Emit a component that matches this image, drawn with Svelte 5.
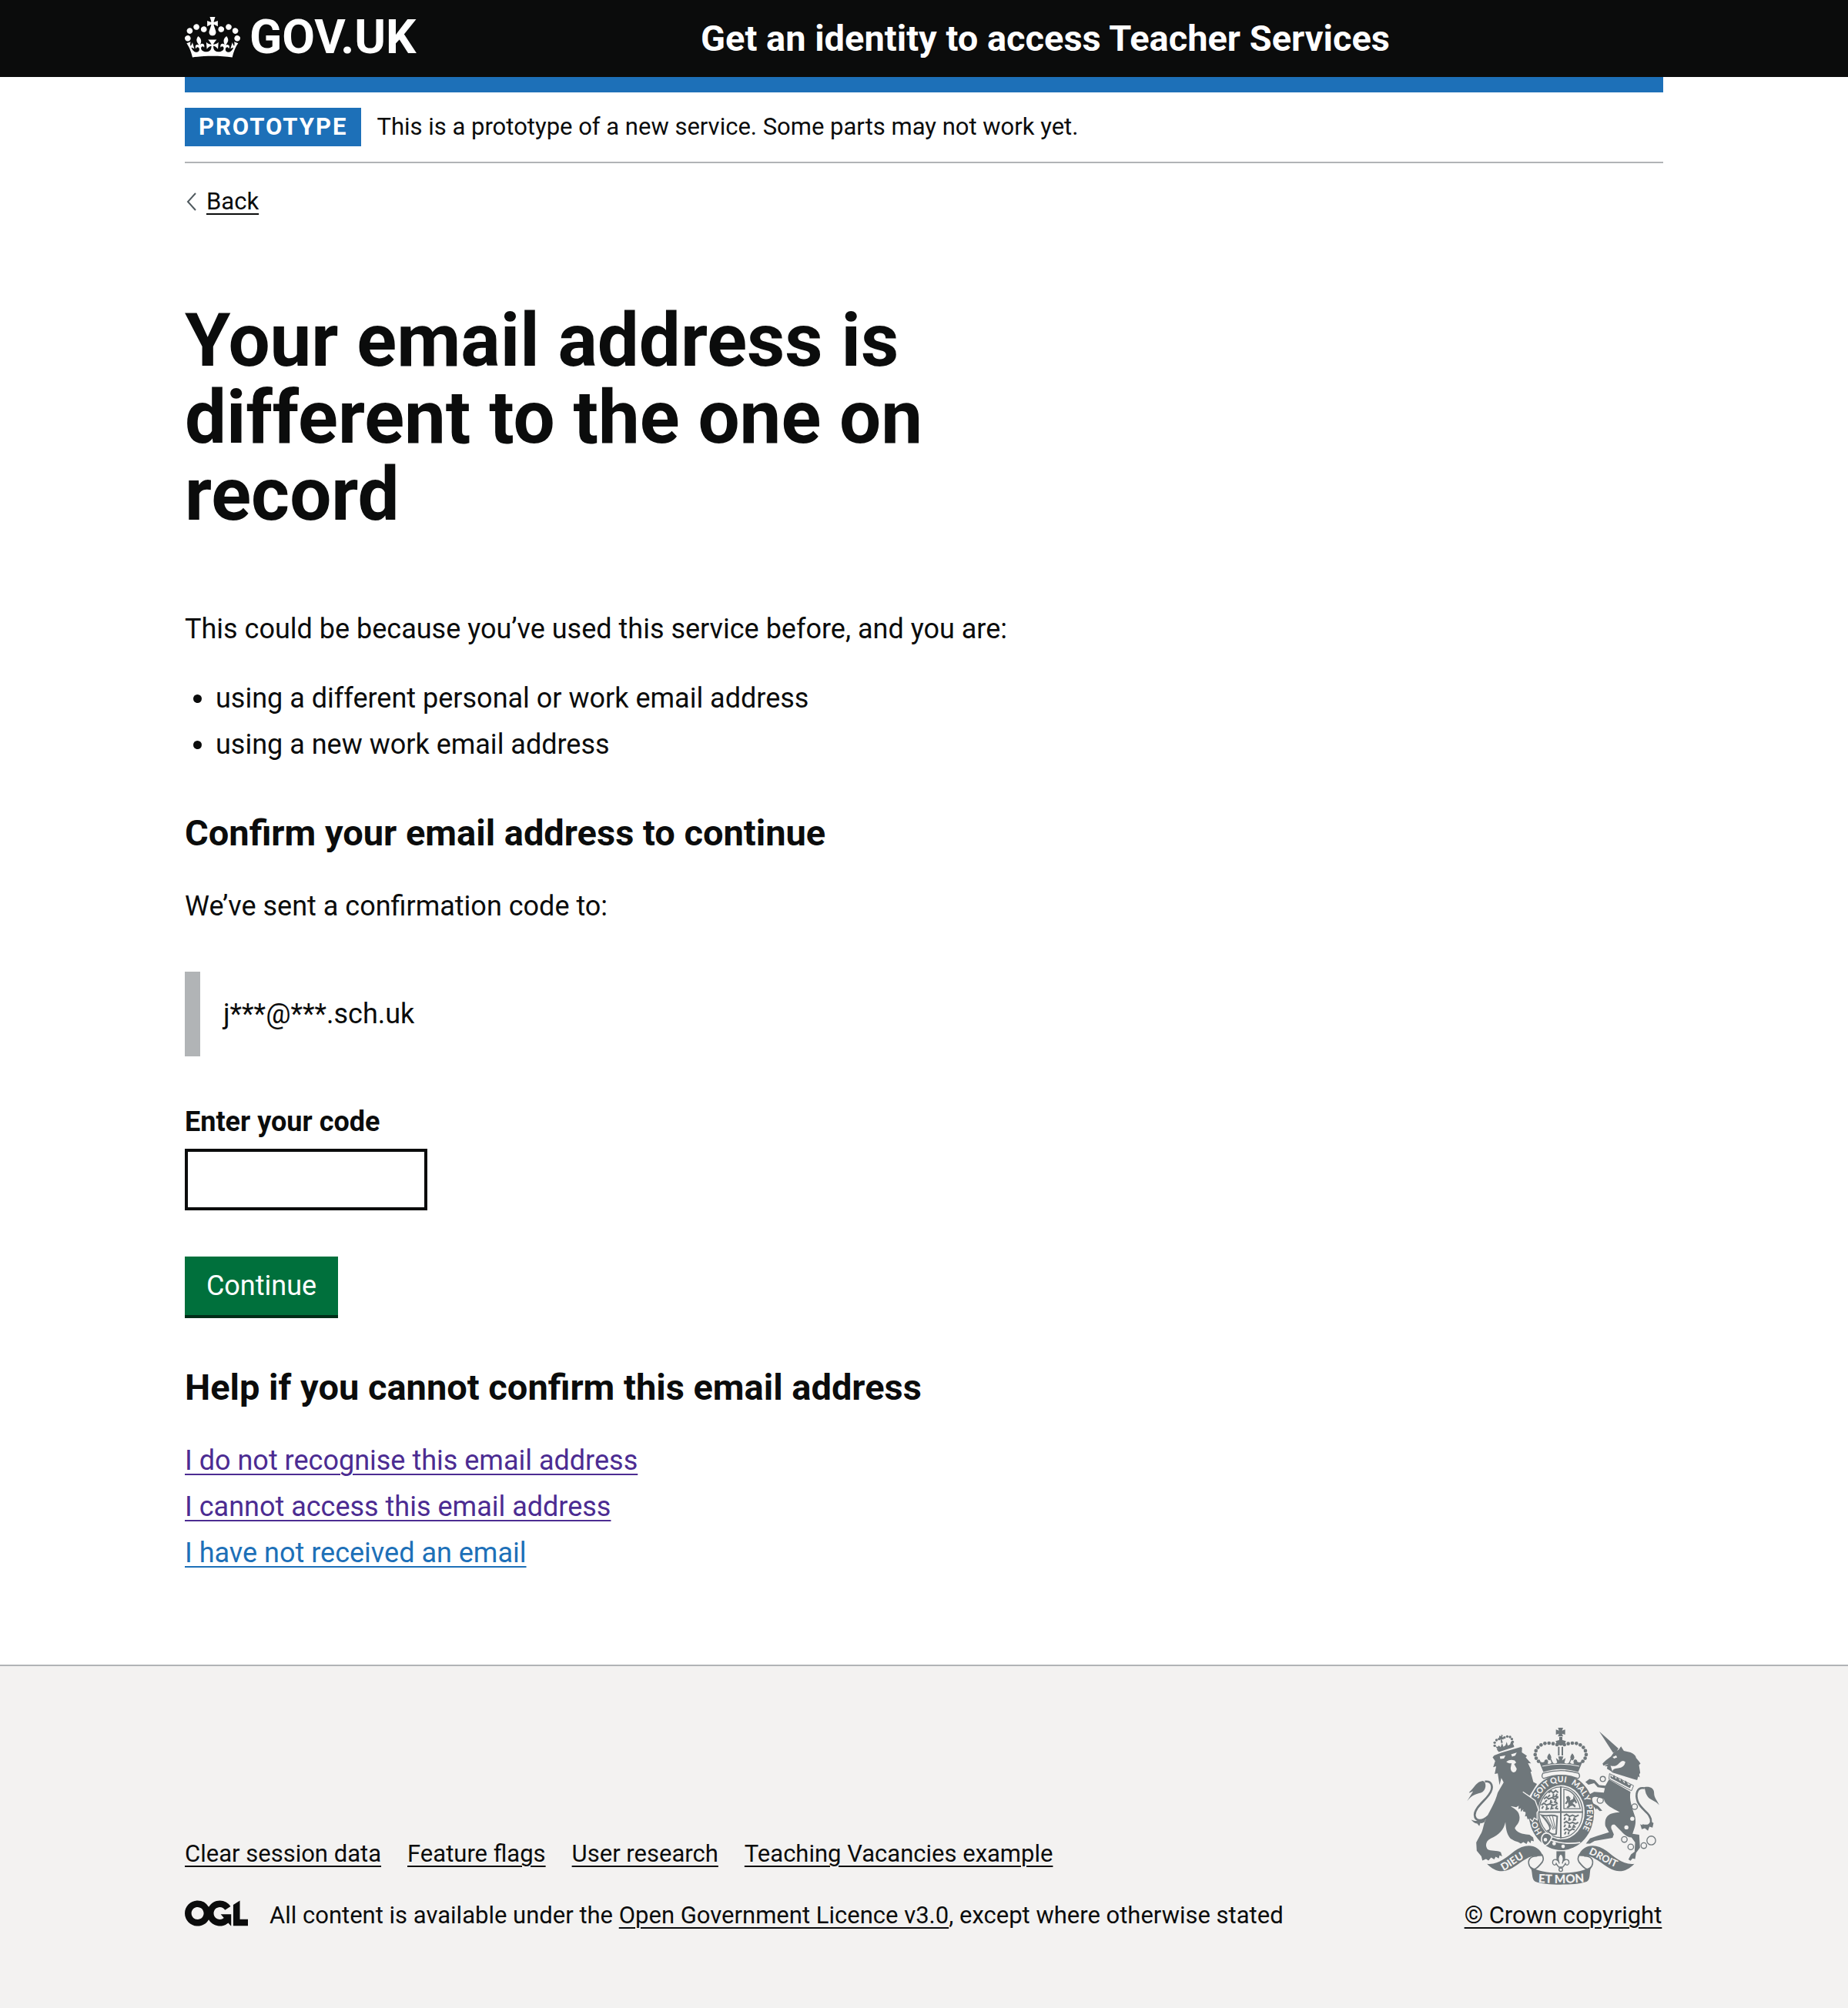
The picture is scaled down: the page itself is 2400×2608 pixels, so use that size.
<script>
  const footerLinks = ['Clear session data', 'Feature flags', 'User research', 'Teaching Vacancies example'];
  const reasons = ['using a different personal or work email address', 'using a new work email address'];
  const helpLinks = [
    { text: 'I do not recognise this email address', visited: true },
    { text: 'I cannot access this email address', visited: true },
    { text: 'I have not received an email', visited: false }
  ];
  let code = $state('');

  // Pearls along the two arches of the central crown.
  const pearls = [
    [423, 138], [408, 134], [392, 132], [376, 133], [361, 139], [349, 149],
    [341, 162], [338, 177], [342, 191], [351, 203],
    [452, 138], [467, 134], [483, 132], [499, 133], [514, 139], [526, 149],
    [534, 162], [537, 177], [533, 191], [524, 203]
  ];
  const lionPearls = [[180, 142], [180, 130], [187, 120], [197, 116], [218, 110], [229, 106], [240, 108], [247, 116], [250, 127]];
  // Chain links hanging from the unicorn's collar.
  const chain = [[602, 272, 11], [592, 355, 13], [726, 380, 12], [686, 508, 12], [711, 537, 12], [762, 532, 12], [791, 512, 18]];
</script>

<svelte:head><title>Your email address is different to the one on record</title></svelte:head>

<header class="header">
  <div class="container header-grid">
    <a class="logo" href="#top" aria-label="GOV.UK">
      <svg class="crown" viewBox="0 0 132 97" aria-hidden="true"><path fill="currentColor" d="M25 30.2c3.5 1.5 7.7-.2 9.1-3.7 1.5-3.6-.2-7.8-3.9-9.2-3.6-1.4-7.6.3-9.1 3.9-1.4 3.5.3 7.5 3.9 9zM9 39.5c3.6 1.5 7.8-.2 9.2-3.7 1.5-3.6-.2-7.8-3.9-9.1-3.6-1.5-7.6.2-9.1 3.8-1.4 3.5.3 7.5 3.8 9zM4.4 57.2c3.5 1.5 7.7-.2 9.1-3.8 1.5-3.6-.2-7.7-3.9-9.1-3.5-1.5-7.6.3-9.1 3.8-1.4 3.5.3 7.6 3.9 9.1zm38.3-21.4c3.5 1.5 7.7-.2 9.1-3.8 1.5-3.6-.2-7.7-3.9-9.1-3.6-1.5-7.6.3-9.1 3.8-1.3 3.6.4 7.7 3.9 9.1zm64.4-5.6c-3.6 1.5-7.8-.2-9.1-3.7-1.5-3.6.2-7.8 3.8-9.2 3.6-1.4 7.7.3 9.2 3.9 1.3 3.5-.4 7.5-3.9 9zm15.9 9.3c-3.6 1.5-7.7-.2-9.1-3.7-1.5-3.6.2-7.8 3.7-9.1 3.6-1.5 7.7.2 9.2 3.8 1.5 3.5-.3 7.5-3.8 9zm4.7 17.7c-3.6 1.5-7.8-.2-9.2-3.8-1.5-3.6.2-7.7 3.9-9.1 3.6-1.5 7.7.3 9.2 3.8 1.3 3.5-.4 7.6-3.9 9.1zM89.3 35.8c-3.6 1.5-7.8-.2-9.2-3.8-1.4-3.6.2-7.7 3.9-9.1 3.6-1.5 7.7.3 9.2 3.8 1.4 3.6-.3 7.7-3.9 9.1zM69.7 17.7l8.9 4.7V9.3l-8.9 2.8c-.2-.3-.5-.6-.9-.9L72.4 0H59.6l3.5 11.2c-.3.3-.6.5-.9.9l-8.8-2.8v13.1l8.8-4.7c.3.3.6.7.9.9l-5 15.4v.1c-.2.8-.4 1.6-.4 2.4 0 4.1 3.1 7.5 7 8.1h.2c.3 0 .7.1 1 .1.4 0 .7 0 1-.1h.2c4-.6 7.1-4.1 7.1-8.1 0-.8-.1-1.7-.4-2.4V34l-5.1-15.4c.4-.2.7-.6 1-.9zM66 92.8c16.9 0 32.8 1.1 47.1 3.2 4-16.9 8.9-26.7 14-33.5l-9.6-3.4c1 4.9 1.1 7.2 0 10.2-1.5-1.4-3-4.3-4.2-8.7L108.6 76c2.8-2 5-3.2 7.5-3.3-4.4 9.4-10 11.9-13.6 11.2-4.3-.8-6.3-4.6-5.6-7.9 1-4.7 5.7-5.9 8-.5 4.3-8.7-3-11.4-7.6-8.8 7.1-7.2 7.9-13.5 2.1-21.1-8 6.1-8.1 12.3-4.5 20.8-4.7-5.4-12.1-2.5-9.5 6.2 3.4-5.2 7.9-2 7.2 3.1-.6 4.3-6.4 7.8-13.5 7.2-10.3-.9-10.9-8-11.2-13.8 2.5-.5 7.1 1.8 11 7.3L80.2 60c-4.1 4.4-8 5.3-12.3 5.4 1.4-4.4 8-11.6 8-11.6H55.5s6.4 7.2 7.9 11.6c-4.2-.1-8-1-12.3-5.4l1.4 16.4c3.9-5.5 8.5-7.7 10.9-7.3-.3 5.8-.9 12.8-11.1 13.8-7.2.6-12.9-2.9-13.5-7.2-.7-5 3.8-8.3 7.1-3.1 2.7-8.7-4.6-11.6-9.4-6.2 3.7-8.5 3.6-14.7-4.6-20.8-5.8 7.6-5 13.9 2.2 21.1-4.7-2.6-11.9.1-7.7 8.8 2.3-5.5 7.1-4.2 8.1.5.7 3.3-1.3 7.1-5.7 7.9-3.5.7-9-1.8-13.5-11.2 2.5.1 4.7 1.3 7.5 3.3l-4.7-15.4c-1.2 4.4-2.7 7.2-4.3 8.7-1.1-3-.9-5.3 0-10.2l-9.5 3.4c5 6.9 9.9 16.7 14 33.5 14.8-2.1 30.8-3.2 47.7-3.2z" /></svg>
      <span>GOV.UK</span>
    </a>
    <a class="service" href="#service">Get an identity to access Teacher Services</a>
  </div>
</header>

<div class="container" id="top">
  <div class="phase">
    <strong class="tag">Prototype</strong>
    <span>This is a prototype of a new service. Some parts may not work yet.</span>
  </div>

  <a class="back" href="#back">
    <svg viewBox="0 0 16 24" aria-hidden="true"><path d="M14 1 4 12l10 11" fill="none" stroke="#505a5f" stroke-width="2" /></svg>
    <span>Back</span>
  </a>

  <main>
    <h1>Your email address is different to the one on record</h1>
    <p>This could be because you’ve used this service before, and you are:</p>
    <ul class="bullets">
      {#each reasons as reason}<li>{reason}</li>{/each}
    </ul>
    <h2>Confirm your email address to continue</h2>
    <p>We’ve sent a confirmation code to:</p>
    <div class="inset">j***@***.sch.uk</div>
    <form onsubmit={(e) => e.preventDefault()}>
      <label for="code">Enter your code</label>
      <input id="code" type="text" inputmode="numeric" autocomplete="one-time-code" bind:value={code} />
      <button type="submit">Continue</button>
    </form>
    <h2>Help if you cannot confirm this email address</h2>
    <ul class="help">
      {#each helpLinks as link}
        <li><a class:visited={link.visited} href="#help">{link.text}</a></li>
      {/each}
    </ul>
  </main>
</div>

<footer>
  <div class="container meta">
    <div class="meta-left">
      <ul class="footer-links">
        {#each footerLinks as link}<li><a href="#footer">{link}</a></li>{/each}
      </ul>
      <div class="licence">
        <svg class="ogl" viewBox="0 0 483.2 195.7" aria-hidden="true"><path fill="currentColor" d="M421.5 142.8V.1l-50.7 32.3v161.1h112.4v-50.7zm-122.3-9.6A47.12 47.12 0 0 1 221 97.8c0-26 21.1-47.1 47.1-47.1 16.7 0 31.4 8.7 39.7 21.8l42.7-27.2A97.63 97.63 0 0 0 268.1 0c-36.5 0-68.3 20.1-85.1 49.7A98 98 0 0 0 97.8 0C43.9 0 0 43.9 0 97.8s43.9 97.8 97.8 97.8c36.5 0 68.3-20.1 85.1-49.7a97.76 97.76 0 0 0 149.6 25.4l19.4 22.2h3v-87.8h-80l24.3 27.5zM97.8 145c-26 0-47.1-21.1-47.1-47.1s21.1-47.1 47.1-47.1 47.1 21.1 47.1 47.1S123.8 145 97.8 145" /></svg>
        <span>All content is available under the <a href="#licence">Open Government Licence v3.0</a>, except where otherwise stated</span>
      </div>
    </div>

    <a class="copyright" href="#copyright">
      <svg class="arms" viewBox="72 72 750 613" aria-hidden="true">
        <defs>
          <path id="garter" d="M368 484 A100 118 0 1 1 512 484" />
          <path id="dieu" d="M214 630 C245 616 275 586 324 568" />
          <path id="etmon" d="M345 676 Q438 682 535 674" />
          <path id="droit" d="M546 564 C580 576 620 609 684 628" />
        </defs>
        <g fill="#6f777b">
          <!-- lion -->
          <path d="M172 188 L178 180 L205 170 L282 147 L287 150 L286 168 L306 182 L301 188 L322 211 L310 210 L325 243 L320 243 L331 284 L345 291 L316 338 L290 322 L340 362 L352 392 L344 405 L342 426 L332 418 L328 432 L320 422 L310 430 L308 416 L298 418 L302 402 L290 398 L292 390 L282 400 L282 386 L272 390 L274 376 L264 382 L242 378 C262 392 275 398 277 420 C279 448 258 455 259 466 C272 488 300 488 316 490 L330 500 L333 515 L322 512 L320 523 L310 514 L304 526 L292 518 L282 524 L272 518 L258 514 L242 505 C230 490 224 475 222 440 C216 470 196 490 165 504 C145 514 142 532 152 546 C166 556 190 548 204 558 L209 574 L199 570 L196 582 L184 575 L178 586 L166 578 L156 590 L146 584 L132 590 L128 574 L110 552 L108 520 L124 490 C136 470 135 450 145 430 C160 395 180 370 192 325 L215 285 L206 268 L199 296 L192 250 L180 252 L186 222 L174 226 L182 202 Z" />
          <path d="M72 359 L96 320 Q74 330 82 322 C102 304 108 282 134 279 C150 284 148 318 126 326 C108 331 90 334 72 359 Z" />
          <path d="M142 282 C168 278 180 304 157 334 C138 360 102 385 102 412 C103 438 130 440 156 416" fill="none" stroke="#6f777b" stroke-width="8" />
          <path d="M88 430 C104 440 128 436 150 418 L140 440 Q132 446 124 444 L120 456 L112 446 Q98 444 88 430 Z" />
          <path d="M188 156 L254 138 L256 147 L196 167 Z" />
          <path d="M191 156 L183 144 Q194 150 196 141 L203 148 L209 132 L214 146 L222 141 L227 127 L231 142 L240 137 L244 126 L253 124 L252 140 Z" />
          <path d="M198 103 L206 106 L205 99 L212 101 L209 108 L216 111 L214 118 L207 117 L212 130 L205 132 L203 118 L197 113 Z" />
          {#each lionPearls as [x, y]}<circle cx={x} cy={y} r="5" />{/each}

          <!-- unicorn -->
          <path d="M588 86 L663 153 L656 164 L642 170 Z" />
          <path d="M601 212 L615 198 L634 184 L645 168 L664 158 L673 145 L684 162 L710 168 Q730 176 732 190 L744 204 L749 212 L743 218 L748 248 L744 254 L746 266 L740 262 L736 276 L720 272 L640 247 L632 240 L618 232 L620 222 L608 222 L626 212 L604 220 Z" />
          <path d="M626 274 L710 322 C704 350 715 380 728 420 C734 448 724 468 718 486 L744 490 L747 540 L732 560 L728 584 L718 582 L710 591 L702 586 L712 566 L726 556 L728 520 L714 500 C695 500 680 482 668 470 L648 450 C637 448 630 456 638 472 L645 488 L640 502 L570 514 L552 524 L536 524 L552 504 L580 494 L626 480 L612 456 C608 420 622 404 668 402 C640 386 610 374 606 350 L576 342 C560 338 553 355 566 368 L584 378 L600 396 L590 397 L578 386 L576 392 L560 370 L546 350 L550 332 L568 322 L606 325 L610 308 L582 304 L568 288 L546 294 L534 284 L550 272 L570 276 L588 296 L612 298 Z" />
          <path d="M628 251 L722 298 L714 318 L626 272 Z" fill="#f3f2f1" stroke="#6f777b" stroke-width="3" />
          <path d="M632 268 L632 256 L640 266 L646 256 L653 272 L659 264 L670 280 L674 270 L686 288 L691 278 L702 296 L714 292 L708 308 Z" />
          <path d="M765 308 C735 302 728 330 738 360 C752 395 792 405 790 440 C786 456 772 456 756 452" fill="none" stroke="#6f777b" stroke-width="8" />
          <path d="M764 304 C782 300 802 306 802 326 C802 346 812 352 822 374 C808 356 784 356 774 336 C768 326 768 316 764 304 Z" />
          <path d="M800 444 L796 462 L784 458 L778 474 L766 464 L754 468 L748 448 L764 456 Q782 456 788 438 Z" />
          {#each chain as [x, y, r]}
            <circle cx={x} cy={y} r={r - 1} fill={x === 726 ? '#f3f2f1' : 'none'} stroke="#6f777b" stroke-width="4" />
          {/each}

          <!-- garter and shield -->
          <ellipse cx="440" cy="402" rx="128" ry="148" />
          <ellipse cx="440" cy="402" rx="91" ry="106" fill="#f3f2f1" />
          <ellipse cx="438" cy="402" rx="85" ry="99" fill="none" stroke="#6f777b" stroke-width="4" />
          <path d="M438 300V504M352 401H524" fill="none" stroke="#6f777b" stroke-width="6" />
          <g fill="none" stroke="#6f777b" stroke-width="6">
            <path d="M390 326l10-8 8 8 10-9 10 8M396 334l-8 8M410 330l-2 12 8-2M424 330l-6 10 10 2M372 350l10-8 8 8 14-5 10 6 14-8M384 354l-8 8M400 354l-2 10 8-2M420 352l-6 10 10 2M362 374l10-8 10 8 14-5 14 6 16-8M370 378l-6 10M384 378l-2 12 10-3M404 376l-4 12 10-2M424 376l-6 10 10 3" />
            <path d="M450 416l10-6 12 8 12-5 12 6 12-6M456 422l-5 10M472 422l-2 10 8-2M492 422l-4 10 10-2M450 444l10-6 12 8 12-5 12 6 10-6M456 450l-5 10M472 450l-2 10 8-2M490 450l-4 10 10-2M450 472l10-6 12 8 12-7 8 3M458 478l-5 10M470 478l-3 10" />
          </g>
          <path d="M450 312 Q498 318 514 388 H450 Z" fill="none" stroke="#6f777b" stroke-width="4" />
          <path d="M458 342l10-4 8 8-2 10 12-6 2-14 6 12 8 16-6 4-4-8-8 6 12 10-2 8-10-8-8 2-8 8-8-2 8-10-2-12-6 8-6-2 8-12Z" />
          <path d="M364 414 C385 420 400 408 424 418 L420 486 Q404 494 388 474 Q412 468 364 414 Z" fill="none" stroke="#6f777b" stroke-width="6" />
          <path d="M382 420L408 470M394 418L412 468M406 416L416 466M376 422L398 456" stroke="#6f777b" stroke-width="3" />
          <path d="M364 494 C400 516 455 530 514 520" fill="none" stroke="#f3f2f1" stroke-width="5" />
          <path d="M372 486 C358 498 360 522 376 532 C392 526 398 512 404 498 C396 484 382 480 372 486 Z" stroke="#f3f2f1" stroke-width="5" />
          <circle cx="378" cy="509" r="7" fill="#f3f2f1" />
          <circle cx="412" cy="524" r="7" fill="#f3f2f1" />
          <circle cx="447" cy="535" r="7" fill="#f3f2f1" />
          <path d="M290 322 L336 356 L348 392 L342 402 L344 428 L333 420 L327 434 L318 424 L308 428 L300 400 L290 380 Z" />
          <path d="M290 322 L338 356 L352 394 L345 403 L346 432 L334 424 L328 438 L318 428" fill="none" stroke="#f3f2f1" stroke-width="4" />

          <!-- central crown -->
          {#each pearls as [x, y]}<circle cx={x} cy={y} r="7" />{/each}
          <path d="M427 72h20l-4 11 12-4v20l-12-4 4 11h-20l4-11-12 4V79l12 4Z" />
          <path d="M432 108h12v12l14 4q-4 16-20 18q-16-2-20-18l14-4ZM427 146h6v34h-6ZM441 146h6v34h-6Z" />
          <path d="M355 208 L350 198 Q362 212 374 204 Q374 194 384 196 Q392 202 386 212 Q396 216 402 208 L392 186 L393 172 L396 184 L407 208 Q414 216 424 208 L419 190 L432 200 L428 184 H448 L443 200 L457 190 L452 208 Q460 216 470 208 L480 184 L483 172 L484 186 L474 208 Q480 216 490 212 Q484 202 492 196 Q502 194 502 204 Q514 212 526 198 L521 208 L506 245 Q438 222 370 245 Z" />
          <path d="M393 172q-16 18 0 28q16-10 0-28ZM483 172q-16 18 0 28q16-10 0-28Z" />
          <path d="M366 222 Q438 206 510 222" fill="none" stroke="#f3f2f1" stroke-width="3" />
          <path d="M368 250 Q438 228 508 250 Q516 264 505 270 Q438 244 371 270 Q360 264 368 250 Z" fill="#f3f2f1" stroke="#6f777b" stroke-width="4" />

          <!-- motto ribbon -->
          <path d="M150 603 C195 608 225 578 258 553 C298 522 350 524 368 572 L340 574 C318 566 280 600 248 620 C210 642 178 632 150 603 Z" />
          <path d="M725 603 C680 608 650 578 617 553 C577 522 525 524 507 572 L535 574 C557 566 595 600 627 620 C665 642 697 632 725 603 Z" />
          <path d="M346 573 C318 572 306 590 316 612 C330 640 350 616 366 596 C372 586 370 576 364 566" fill="none" stroke="#6f777b" stroke-width="5" />
          <path d="M529 573 C557 572 569 590 559 612 C545 640 525 616 509 596 C503 586 505 576 511 566" fill="none" stroke="#6f777b" stroke-width="5" />
          <path d="M318 612 C360 648 515 648 557 612 C548 632 556 662 540 672 C500 688 375 688 338 672 C322 662 330 632 318 612 Z" />
          <path d="M421 554h34v36h-34Z" />
          <path d="M438 562 C424 578 428 588 432 602 C430 584 406 580 406 598 C406 608 416 612 420 602 C424 610 428 612 430 616 H446 C448 612 452 610 456 602 C460 612 470 608 470 598 C470 580 446 584 444 602 C448 588 452 578 438 562 Z" fill="#f3f2f1" stroke="#6f777b" stroke-width="4" />
          <circle cx="438" cy="626" r="7" fill="#f3f2f1" stroke="#6f777b" stroke-width="4" />

          <!-- faces and chain links over the body -->
          <g fill="#f3f2f1">
            <path d="M200 184l22-4-6 12-14 2ZM244 176l22-7-6 12-12 4ZM226 204q14-10 32-4l6 8-8 6 10 18q-2 14-12 14t-12-16l4-20q-10 4-20-4Z" />
            <path d="M640 186l14-6 4 8-12 4ZM632 220q20 6 34-10t24-4q-4 22-28 24t-22 14Z" />
            <circle cx="717" cy="427" r="8" /><circle cx="694" cy="461" r="8" />
          </g>
        </g>
        <g class="motto" fill="#f3f2f1">
          <g font-size="32">
            <text><textPath href="#garter" startOffset="4">HO</textPath></text>
            <text><textPath href="#garter" startOffset="142">SOIT</textPath></text>
            <text><textPath href="#garter" startOffset="219">QUI</textPath></text>
            <text><textPath href="#garter" startOffset="298">MAL</textPath></text>
            <text><textPath href="#garter" startOffset="368">Y</textPath></text>
            <text><textPath href="#garter" startOffset="400">PENSE</textPath></text>
          </g>
          <text font-size="40"><textPath href="#dieu">DIEU</textPath></text>
          <text font-size="46"><textPath href="#etmon" startOffset="50%" text-anchor="middle">ET MON</textPath></text>
          <text font-size="38"><textPath href="#droit">DROIT</textPath></text>
        </g>
      </svg>
      <span>© Crown copyright</span>
    </a>
  </div>
</footer>

<style>
  :global(body) { background: #fff; }
  :global(#app) { color: #0b0c0c; font-family: Roboto, "Liberation Sans", sans-serif; font-size: 36px; line-height: 50px; }
  .container { width: calc(100% - 120px); max-width: 1920px; margin: 0 auto; }
  a { color: inherit; text-decoration-thickness: 2px; text-underline-offset: 5px; }
  ul { margin: 0; padding: 0; }
  h1, h2, p { margin: 0; }

  .header { background: #0b0c0c; color: #fff; }
  .header-grid { display: grid; grid-template-columns: 1fr 2fr; align-items: center; min-height: 100px; }
  .header a { color: #fff; text-decoration: none; font-weight: 700; }
  .logo { display: flex; align-items: center; gap: 12px; padding-bottom: 4px; font-size: 62px; line-height: 60px; }
  .crown { display: block; width: 72px; height: 53px; }
  .service { padding-left: 30px; font-size: 47px; line-height: 60px; }

  .phase { display: flex; align-items: center; gap: 20px; padding: 20px 0; border-top: 20px solid #1d70b8; border-bottom: 2px solid #b1b4b6; font-size: 31px; line-height: 50px; }
  .tag { padding: 0 18px; background: #1d70b8; color: #fff; letter-spacing: 2px; text-transform: uppercase; }
  .back { display: flex; align-items: center; gap: 12px; width: fit-content; margin-top: 30px; font-size: 31px; line-height: 40px; text-decoration: none; }
  .back svg { width: 16px; height: 24px; }
  .back span { text-decoration: underline; text-decoration-thickness: 2px; text-underline-offset: 5px; }

  main { width: calc(66.6667% - 30px); padding: 110px 0 120px; }
  h1 { margin-bottom: 100px; font-size: 96px; line-height: 100px; }
  h2 { margin-bottom: 40px; font-size: 47px; line-height: 60px; }
  .bullets { margin: 40px 0 60px; padding-left: 40px; }
  li + li { margin-top: 10px; }
  .inset { margin: 60px 0; padding: 30px; border-left: 20px solid #b1b4b6; }
  form { margin-bottom: 64px; }
  label { display: block; margin-bottom: 10px; font-weight: 700; }
  input { display: block; box-sizing: border-box; width: 315px; height: 80px; padding: 10px; border: 4px solid #0b0c0c; border-radius: 0; font: inherit; }
  button { display: block; min-width: 199px; margin-top: 60px; padding: 13px 24px; border: 0; background: #00703c; box-shadow: 0 4px 0 #002d18; color: #fff; font: inherit; }
  .help { list-style: none; }
  .help a { color: #1d70b8; }
  .help a.visited { color: #4c2c92; }

  footer { padding: 80px 0 100px; border-top: 2px solid #b1b4b6; background: #f3f2f1; font-size: 31px; line-height: 40px; }
  .meta { display: flex; align-items: flex-end; justify-content: space-between; gap: 40px; }
  .footer-links { display: flex; flex-wrap: wrap; gap: 34px; margin-bottom: 40px; list-style: none; }
  .footer-links li { margin: 0; }
  .licence { display: flex; align-items: flex-start; gap: 28px; }
  .ogl { flex: none; width: 82px; height: 34px; }
  .copyright { display: flex; flex-direction: column; align-items: center; gap: 20px; min-width: 260px; white-space: nowrap; }
  .arms { width: 250px; height: 204px; }
  .motto { font-family: Lato, sans-serif; font-weight: 900; }
</style>
